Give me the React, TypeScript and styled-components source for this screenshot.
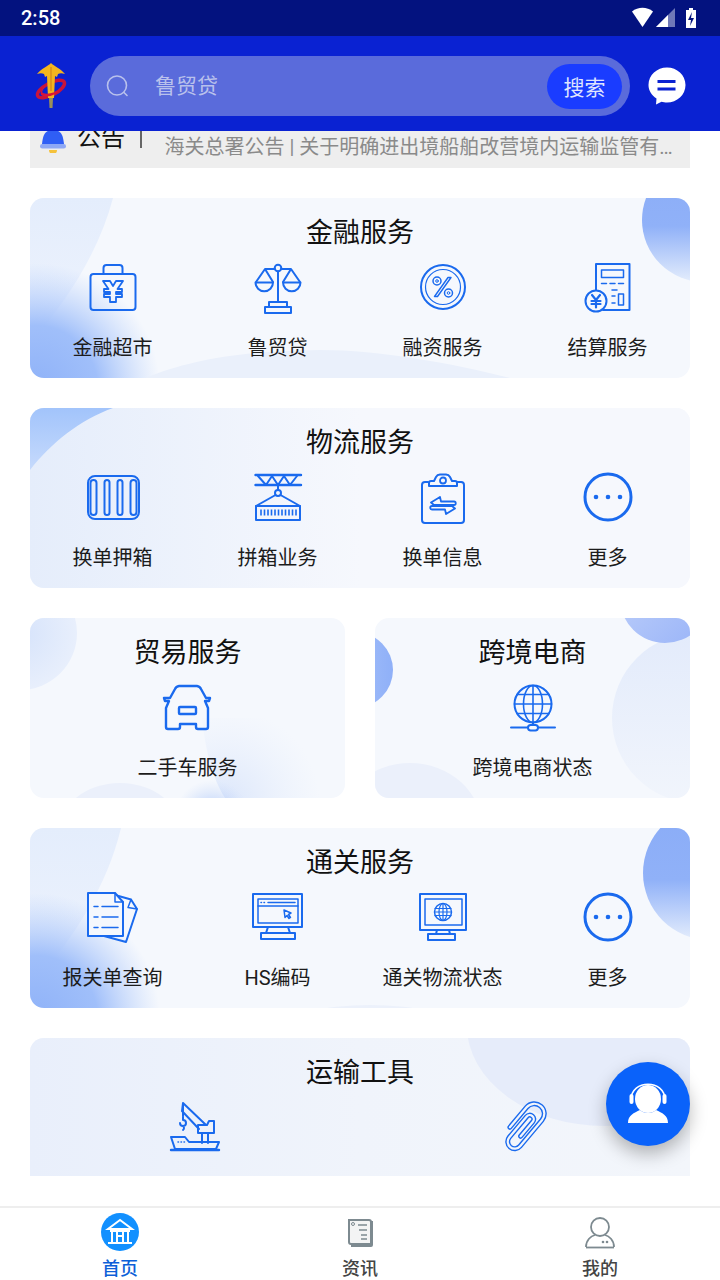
import React from "react";
import styled, { createGlobalStyle } from "styled-components";

const CJK = `Roboto, "Noto Sans CJK SC", "Noto Sans", sans-serif`;
const BLUE = "#1a6aee";

const Global = createGlobalStyle`
  html, body { margin: 0; padding: 0; background: #fff; }
  body { font-family: ${CJK}; }
`;

const Shell = styled.div`
  position: relative;
  width: 720px;
  height: 1280px;
  overflow: hidden;
  display: flex;
  flex-direction: column;
  background: #fff;
`;
const StatusBar = styled.div`
  height: 36px;
  flex: none;
  background: #03127f;
  display: flex;
  align-items: center;
  justify-content: space-between;
  padding: 0 21px;
  color: #fff;
`;
const Clock = styled.span`
  font: 500 20px Roboto, sans-serif;
`;
const StatusIcons = styled.div`
  display: flex;
  align-items: center;
`;
const Header = styled.header`
  position: relative;
  z-index: 2;
  height: 95px;
  flex: none;
  background: #0a22d2;
  display: flex;
  align-items: center;
  padding: 5px 32px 0 34px;
  box-sizing: border-box;
`;
const SearchPill = styled.div`
  width: 540px;
  height: 60px;
  margin: 0 17px 0 22px;
  border-radius: 30px;
  background: #5a6bdb;
  display: flex;
  align-items: center;
  padding: 0 8px 0 16px;
  box-sizing: border-box;
`;
const Placeholder = styled.span`
  flex: 1;
  margin-left: 25px;
  font-size: 21px;
  line-height: 28px;
  color: #b9c1ec;
`;
const SearchButton = styled.span`
  width: 75px;
  height: 45px;
  border-radius: 23px;
  background: #1a3cff;
  color: #dfe4ff;
  font-size: 21px;
  display: flex;
  align-items: center;
  justify-content: center;
`;
const Main = styled.main`
  flex: 1;
  min-height: 0;
  overflow: hidden;
  padding: 0 30px;
  display: flex;
  flex-direction: column;
  gap: 30px;
`;
const Notice = styled.div`
  flex: none;
  height: 67px;
  margin-top: -30px;
  background: #eeeeee;
  display: flex;
  align-items: flex-start;
  padding: 22px 0 0 10px;
  box-sizing: border-box;
`;
const NoticeLabel = styled.span`
  margin-left: 11px;
  font-size: 24px;
  line-height: 30px;
  color: #111;
`;
const NoticeRule = styled.span`
  width: 1.5px;
  height: 18px;
  margin: 7px 23px 0 15px;
  background: #666;
  flex: none;
`;
const NoticeText = styled.span`
  width: 512px;
  margin-top: 9px;
  font-size: 20px;
  line-height: 30px;
  color: #8a8a8a;
  white-space: nowrap;
  overflow: hidden;
  text-overflow: ellipsis;
`;
const Card = styled.section`
  position: relative;
  flex: none;
  height: 180px;
  border-radius: 14px;
  overflow: hidden;
  background: #f5f8fd;
  padding-top: 14px;
  box-sizing: border-box;
`;
const Art = styled.svg`
  position: absolute;
  inset: 0;
`;
const Title = styled.h2`
  position: relative;
  margin: 0 0 9px;
  text-align: center;
  font-size: 27px;
  line-height: 42px;
  font-weight: 400;
  color: #111;
`;
const Items = styled.div<{ $cols: number }>`
  position: relative;
  display: grid;
  grid-template-columns: repeat(${(p) => p.$cols}, 1fr);
`;
const Item = styled.div`
  display: flex;
  flex-direction: column;
  align-items: center;
  gap: 18px;
`;
const ItemLabel = styled.span`
  font-size: 20px;
  line-height: 30px;
  color: #1c1c1c;
  white-space: nowrap;
`;
const Glyph = styled.svg`
  display: block;
  overflow: visible;
  fill: none;
  stroke: ${BLUE};
  stroke-width: 2;
  stroke-linejoin: round;
  stroke-linecap: round;
`;
const HalfRow = styled.div`
  flex: none;
  display: grid;
  grid-template-columns: 1fr 1fr;
  gap: 30px;
`;
const Fab = styled.button`
  position: absolute;
  left: 606px;
  top: 1062px;
  width: 84px;
  height: 84px;
  padding: 0;
  border: 0;
  border-radius: 50%;
  background: #0a62fa;
  box-shadow: 0 8px 18px rgba(0, 0, 0, 0.28);
  display: flex;
  align-items: center;
  justify-content: center;
`;
const TabBar = styled.nav`
  flex: none;
  height: 74px;
  margin-top: 30px;
  border-top: 2px solid #eeeeee;
  box-sizing: border-box;
  display: grid;
  grid-template-columns: repeat(3, 240px);
`;
const Tab = styled.div`
  display: flex;
  flex-direction: column;
  align-items: center;
  padding-top: 5px;
`;
const TabIcon = styled.svg`
  display: block;
  height: 38px;
  width: 40px;
`;
const TabLabel = styled.span<{ $active?: boolean }>`
  margin-top: 7px;
  font-size: 18px;
  line-height: 22px;
  font-weight: 500;
  color: ${(p) => (p.$active ? "#0d5fd8" : "#444")};
`;

const Svg = ({ children }: { children: React.ReactNode }) => (
  <Glyph width="60" height="52" viewBox="0 0 60 52">
    {children}
  </Glyph>
);

const Briefcase = () => (
  <Svg>
    <rect x="7.500" y="11" width="45" height="36" rx="3" />
    <path d="M20.5 11V5a3 3 0 0 1 3-3h13a3 3 0 0 1 3 3v6" />
    <path strokeWidth="1.8" d="M20 18h7l3 5 3-5h7l-5.500 8h4.500v3h-6v2h6v3h-6v5h-6v-5h-6v-3h6v-2h-6v-3h4.500z" />
  </Svg>
);
const Scale = () => (
  <Svg>
    <circle cx="30" cy="5" r="3.300" />
    <path d="M30 8.500V39M26.700 6H17l-9 13M33.300 6H43l9 13M17 6l8 13M43 6l-8 13" />
    <path d="M7.500 19.500h17.500a8.700 8.700 0 0 1-17.500 0zM35 19.500h17.500a8.700 8.700 0 0 1-17.500 0z" />
    <path d="M21 44v-5h18v5M17 44h26v6H17z" />
  </Svg>
);
const Percent = () => (
  <Svg>
    <circle cx="30" cy="24" r="22" />
    <circle cx="30" cy="24" r="17.500" strokeWidth="1.200" />
    <circle cx="24" cy="18" r="4" strokeWidth="1.500" />
    <circle cx="24" cy="18" r="1.300" strokeWidth="1" />
    <circle cx="35.500" cy="30" r="4" strokeWidth="1.500" />
    <circle cx="35.500" cy="30" r="1.300" strokeWidth="1" />
    <path strokeWidth="1.400" d="M21.500 33.500L35 14.500h3L24.500 33.500z" />
  </Svg>
);
const Calculator = () => (
  <Svg>
    <path d="M18 29V1h33.500v46H25" />
    <rect x="23.500" y="7" width="22" height="7.500" strokeWidth="1.500" />
    <path strokeWidth="1.500" d="M23.500 20.500h5M32 20.500h5M40.500 20.500h5M34 27h5M34 33h3M34 40h3" />
    <rect x="40.500" y="31" width="5" height="11" strokeWidth="1.500" />
    <circle cx="18" cy="38" r="10.500" fill="#f5f8fd" />
    <path strokeWidth="2.200" d="M14 32l4 5 4-5M13.500 38h9M13.500 41h9M18 37v7.500" />
  </Svg>
);
const Container = () => (
  <Svg>
    <rect x="5" y="3" width="51" height="43" rx="7" />
    <rect x="7.500" y="7" width="6" height="35" rx="3" />
    <rect x="21.500" y="7" width="5" height="35" rx="2.500" />
    <rect x="34.500" y="7" width="5" height="35" rx="2.500" />
    <rect x="47.500" y="7" width="6" height="35" rx="3" />
  </Svg>
);
const Gantry = () => (
  <Svg>
    <path strokeWidth="2.400" d="M7.500 2h45.500M7.500 12h45.500" />
    <path strokeWidth="2" d="M10 3l8 9 6-9 6 9 6-9 6 9 7-9" />
    <circle cx="30" cy="20" r="3" />
    <path d="M30 12v5M27.500 22L8 33M32.500 22L52 33" />
    <rect x="8" y="33" width="44" height="14" />
    <path strokeWidth="1.600" strokeLinecap="butt" d="M13 36.500v6M16.500 36.500v6M20 36.500v6M23.500 36.500v6M27 36.500v6M30.500 36.500v6M34 36.500v6M37.500 36.500v6M41 36.500v6M44.500 36.500v6M48 36.500v6" />
  </Svg>
);
const Clipboard = () => (
  <Svg>
    <path d="M15 9h-3a3 3 0 0 0-3 3v35a3 3 0 0 0 3 3h36a3 3 0 0 0 3-3V12a3 3 0 0 0-3-3h-4" />
    <path d="M16 13V10a2 2 0 0 1 2-2h3l2-4a5 5 0 0 1 4-2.500h6a5 5 0 0 1 4 2.500l2 4h3a2 2 0 0 1 2 2v3z" />
    <circle cx="30" cy="7.500" r="3" strokeWidth="1.800" />
    <path strokeWidth="1.800" d="M27 24l-9 5.500 3 2.500h20a1.500 1.500 0 0 0 0-3.500H28zM33 41l9-5.500-3-2.500H19a1.500 1.500 0 0 0 0 3.500h13z" />
  </Svg>
);
const More = () => (
  <Svg>
    <circle cx="30" cy="24" r="23" strokeWidth="3" />
    <circle cx="18" cy="24" r="2.300" fill={BLUE} stroke="none" />
    <circle cx="30" cy="24" r="2.300" fill={BLUE} stroke="none" />
    <circle cx="42" cy="24" r="2.300" fill={BLUE} stroke="none" />
  </Svg>
);
const Car = () => (
  <Svg>
    <path strokeWidth="2.400" d="M12 15l5-9a5 5 0 0 1 4-3h18a5 5 0 0 1 4 3l5 9h4l-1 3h-4l3 7v19a2 2 0 0 1-2 2h-8a2 2 0 0 1-2-2v-3H22v3a2 2 0 0 1-2 2h-10a2 2 0 0 1-2-2V25l3-7H7l-1-3z" />
    <rect x="21" y="24" width="17" height="7" rx="1" strokeWidth="2.400" />
  </Svg>
);
const Globe = () => (
  <Svg>
    <circle cx="30" cy="21" r="18.500" />
    <ellipse cx="30" cy="21" rx="9.500" ry="18.500" strokeWidth="1.600" />
    <path strokeWidth="1.600" d="M30 2.500v37M14 11.500h32M11.500 21h37M14 30.500h32" />
    <path d="M30 39.500v2M8 44.500h17M35 44.500h17" />
    <rect x="25" y="42" width="10" height="5.500" rx="2.700" />
  </Svg>
);
const Docs = () => (
  <Svg>
    <path d="M32 2l16 4.500 6 9.500-11 33-22-6" />
    <path d="M48 6.500l-3 8 9 1.500" strokeWidth="1.500" />
    <path fill="#f5f8fd" d="M5 0h27l8 9v34H5z" />
    <path d="M32 0v9h8" strokeWidth="1.500" />
    <path strokeWidth="1.500" d="M11 13.500h4M19 13.500h16M11 24h4M19 24h16M11 34.500h4M19 34.500h16" />
  </Svg>
);
const MonitorCursor = () => (
  <Svg>
    <rect x="5" y="1" width="49" height="33" />
    <rect x="10" y="6" width="40" height="24" strokeWidth="1.500" />
    <path strokeWidth="1.500" d="M10 13h40M13 9.500h.5M16 9.500h.5M20 9.500h27" />
    <path strokeWidth="1.500" d="M36 17l7 3-2.500 1.500 2 3-1.500 1-2-3-2 2z" />
    <path d="M20 34l-2 6M40 34l2 6M13 40h34v6H13z" />
  </Svg>
);
const MonitorGlobe = () => (
  <Svg>
    <rect x="7" y="1" width="46" height="36" />
    <rect x="12" y="6" width="37" height="26" strokeWidth="1.500" />
    <circle cx="30" cy="19" r="8.500" strokeWidth="1.500" />
    <ellipse cx="30" cy="19" rx="4" ry="8.500" strokeWidth="1.200" />
    <path strokeWidth="1.200" d="M30 10.500v17M22 15.500h16M21.500 19h17M22 22.500h16" />
    <path d="M24 37l-1 4M36 37l1 4M15 41h27v6H15z" />
  </Svg>
);
const CraneShip = () => (
  <Svg>
    <path d="M18 0l23 22M18 0l-1 8 17 18M18 0v13" />
    <path strokeWidth="2" d="M18 14v3a3 3 0 0 1 0 6 3 3 0 0 1-3-3M18 23a2.500 2.500 0 0 1 0 4" />
    <path d="M33 22h9l2-4h5v12H33zM37 30v10M43 30v10" />
    <path d="M6 34h14l4 5h30l-3 7H10z" />
    <path strokeWidth="1.500" d="M13 39h.5M16 39h.5M19 39h.5" />
    <path strokeWidth="2.400" d="M6 47h48" />
  </Svg>
);
const Clip = () => {
  const d = "M40 14V40a10 10 0 0 1-20 0V6a7 7 0 0 1 14 0V33a4 4 0 0 1-8 0V14";
  return (
    <Svg>
      <g transform="translate(-1 -1) rotate(220 30 24)">
        <path d={d} strokeWidth="5" />
        <path d={d} stroke="#f2f5fb" strokeWidth="2.200" />
      </g>
    </Svg>
  );
};

const Art1 = ({ id, tr = 1 }: { id: string; tr?: number }) => (
  <Art width="660" height="180" viewBox="0 0 660 180">
    <defs>
      <linearGradient id={`${id}a`} x1="0" y1="0" x2="0" y2="1">
        <stop offset="0" stopColor="#e4edfc" />
        <stop offset="1" stopColor="#eef3fd" />
      </linearGradient>
      <radialGradient id={`${id}b`} gradientUnits="userSpaceOnUse" cx="5" cy="190" r="125">
        <stop offset="0" stopColor="#8fb2f8" />
        <stop offset="0.5" stopColor="#a0bffa" />
        <stop offset="1" stopColor="#b8d0fb" stopOpacity="0" />
      </radialGradient>
      <linearGradient id={`${id}c`} x1="0" y1="0" x2="0" y2="1">
        <stop offset="0" stopColor="#8aacf7" />
        <stop offset="0.55" stopColor="#90b1f8" />
        <stop offset="1" stopColor="#e4edfc" />
      </linearGradient>
    </defs>
    <path d={tr === 1 ? "M0 0H83C70 50 40 100 0 145Z" : "M0 0H91C78 55 45 110 0 160Z"} fill={`url(#${id}a)`} />
    <circle cx="5" cy="190" r="125" fill={`url(#${id}b)`} />
    {tr === 1 ? (
      <>
        <path d="M115 180C160 162 210 153 290 152C350 152 420 165 480 180Z" fill="#eaf0fb" />
        <circle cx="674" cy="22" r="62" fill={`url(#${id}c)`} />
      </>
    ) : (
      <>
        <ellipse cx="340" cy="270" rx="170" ry="93" fill="#ecf1fb" />
        <circle cx="680" cy="45" r="67" fill={`url(#${id}c)`} />
      </>
    )}
  </Art>
);

const Art2 = () => (
  <Art width="660" height="180" viewBox="0 0 660 180">
    <defs>
      <linearGradient id="l1" x1="0" y1="0" x2="1" y2="0">
        <stop offset="0" stopColor="#e5edfb" />
        <stop offset="1" stopColor="#f6f8fd" />
      </linearGradient>
      <linearGradient id="l2" x1="0" y1="0" x2="0" y2="1">
        <stop offset="0" stopColor="#a2c4fb" />
        <stop offset="1" stopColor="#c6dafc" />
      </linearGradient>
    </defs>
    <rect width="330" height="180" fill="url(#l1)" />
    <rect x="330" width="330" height="180" fill="#f6f8fd" />
    <path d="M0 62V0H83C50 12 22 34 0 62Z" fill="url(#l2)" />
  </Art>
);

const Art3 = () => (
  <Art width="315" height="180" viewBox="0 0 315 180">
    <defs>
      <radialGradient id="t1" gradientUnits="userSpaceOnUse" cx="-10" cy="15" r="57">
        <stop offset="0" stopColor="#d6e3fb" />
        <stop offset="1" stopColor="#e8effc" />
      </radialGradient>
      <radialGradient id="t2" gradientUnits="userSpaceOnUse" cx="182" cy="200" r="38">
        <stop offset="0" stopColor="#9ebcf8" />
        <stop offset="1" stopColor="#c9daf9" stopOpacity="0" />
      </radialGradient>
      <radialGradient id="t3" gradientUnits="userSpaceOnUse" cx="195" cy="185" r="95">
        <stop offset="0" stopColor="#dbe6fb" />
        <stop offset="1" stopColor="#e6eefc" stopOpacity="0" />
      </radialGradient>
    </defs>
    <circle cx="-10" cy="15" r="57" fill="url(#t1)" />
    <path d="M172 100C175 130 182 160 195 180H315V100Z" fill="url(#t3)" />
    <ellipse cx="90" cy="215" rx="62" ry="50" fill="#ebf0fb" />
    <circle cx="182" cy="200" r="38" fill="url(#t2)" />
  </Art>
);

const Art4 = () => (
  <Art width="315" height="180" viewBox="0 0 315 180">
    <defs>
      <linearGradient id="e1" x1="1" y1="0" x2="0" y2="0">
        <stop offset="0" stopColor="#8fb0f8" />
        <stop offset="1" stopColor="#b4cbfa" />
      </linearGradient>
      <linearGradient id="e2" x1="0" y1="0" x2="1" y2="1">
        <stop offset="0" stopColor="#c4d4fa" />
        <stop offset="1" stopColor="#98b3f8" />
      </linearGradient>
      <linearGradient id="e3" x1="0" y1="0" x2="0" y2="1">
        <stop offset="0" stopColor="#e3ebfb" />
        <stop offset="1" stopColor="#f1f5fc" />
      </linearGradient>
    </defs>
    <circle cx="-20" cy="52" r="38" fill="url(#e1)" />
    <circle cx="322" cy="100" r="85" fill="url(#e3)" />
    <ellipse cx="290" cy="-20" rx="45" ry="45" fill="url(#e2)" />
    <ellipse cx="35" cy="210" rx="72" ry="65" fill="#ebf0fb" />
  </Art>
);

const Art5 = () => (
  <Art width="660" height="180" viewBox="0 0 660 180">
    <defs>
      <linearGradient id="v1" x1="0" y1="0" x2="1" y2="0">
        <stop offset="0" stopColor="#e9effb" />
        <stop offset="0.5" stopColor="#f0f4fb" />
        <stop offset="1" stopColor="#f3f6fb" />
      </linearGradient>
    </defs>
    <rect width="660" height="180" fill="url(#v1)" />
    <ellipse cx="575" cy="-12" rx="138" ry="100" fill="#e6ecfa" />
  </Art>
);

const Row = ({ items }: { items: [React.ReactNode, string?][] }) => (
  <Items $cols={items.length}>
    {items.map(([icon, label], i) => (
      <Item key={i}>
        {icon}
        {label && <ItemLabel>{label}</ItemLabel>}
      </Item>
    ))}
  </Items>
);

export default function App() {
  return (
    <Shell>
      <Global />
      <StatusBar>
        <Clock>2:58</Clock>
        <StatusIcons>
          <svg width="67" height="22" viewBox="0 0 67 22">
            <path d="M0 4.500C6 -.5 15 -.5 21 4.500L10.500 20z" fill="#fff" />
            <path d="M24 20L43 1v19z" fill="#6f78b8" />
            <path d="M24 20L36 8v12z" fill="#fff" />
            <path d="M54 3h3V1h4v2h3v18H54z" fill="#fff" />
            <path d="M60 5l-4 8h3l-1 6 4-8h-3z" fill="#03127f" />
          </svg>
        </StatusIcons>
      </StatusBar>
      <Header>
        <svg width="34" height="48" viewBox="0 0 34 48">
          <path d="M15 36h4l-.5 10h-3z" fill="#9a8f5a" />
          <ellipse cx="17" cy="27" rx="15" ry="6" transform="rotate(-28 17 27)" fill="none" stroke="#c9143a" strokeWidth="3.500" />
          <path d="M17 1C14 4 7 7 3 12c3-1 5-1 7 0l1 3 2-1 1 22h6l1-22 2 1 1-3c2-1 4-1 7 0-4-5-11-8-14-11z" fill="#f3b51f" />
          <path d="M17 5v24" stroke="#d98f1c" strokeWidth="1.500" />
          <path d="M9 31c5 2 13-1 18-4-4 5-12 9-18 7-4-1-3-6 3-11-2 3-5 7-3 8z" fill="#d8143a" />
        </svg>
        <SearchPill>
          <svg width="24" height="24" viewBox="0 0 24 24" fill="none" stroke="#b9c1ec" strokeWidth="1.600" strokeLinecap="round">
            <circle cx="11" cy="11.500" r="9.500" />
            <path d="M18 18.500l3 3" />
          </svg>
          <Placeholder>鲁贸贷</Placeholder>
          <SearchButton>搜索</SearchButton>
        </SearchPill>
        <svg width="40" height="38" viewBox="0 0 40 38">
          <path d="M20 0.500C30 .5 38.500 8 38.500 18S30 35.500 20 35.500c-2 0-4-.3-5.500-.8L9 37.500l.5-6C4.500 28 1.500 23.500 1.500 18 1.500 8 10 .5 20 .5z" fill="#fff" />
          <path d="M10.500 14.500h18M10.500 22h18" stroke="#0a22d2" strokeWidth="3" />
        </svg>
      </Header>
      <Main>
        <Notice>
          <svg width="26" height="30" viewBox="0 0 26 30">
            <path d="M9 27h8a4 4 0 0 1-8 0z" fill="#f5c23c" />
            <path d="M2 21c1-8 2-14 11-14s10 6 11 14z" fill="#2f5ef5" />
            <rect y="21" width="26" height="4.500" rx="2.200" fill="#8ea8f5" />
          </svg>
          <NoticeLabel>公告</NoticeLabel>
          <NoticeRule />
          <NoticeText>海关总署公告 | 关于明确进出境船舶改营境内运输监管有关事项的公告</NoticeText>
        </Notice>
        <Card>
          <Art1 id="f" />
          <Title>金融服务</Title>
          <Row items={[[<Briefcase />, "金融超市"], [<Scale />, "鲁贸贷"], [<Percent />, "融资服务"], [<Calculator />, "结算服务"]]} />
        </Card>
        <Card>
          <Art2 />
          <Title>物流服务</Title>
          <Row items={[[<Container />, "换单押箱"], [<Gantry />, "拼箱业务"], [<Clipboard />, "换单信息"], [<More />, "更多"]]} />
        </Card>
        <HalfRow>
          <Card>
            <Art3 />
            <Title>贸易服务</Title>
            <Row items={[[<Car />, "二手车服务"]]} />
          </Card>
          <Card>
            <Art4 />
            <Title>跨境电商</Title>
            <Row items={[[<Globe />, "跨境电商状态"]]} />
          </Card>
        </HalfRow>
        <Card>
          <Art1 id="c" tr={2} />
          <Title>通关服务</Title>
          <Row items={[[<Docs />, "报关单查询"], [<MonitorCursor />, "HS编码"], [<MonitorGlobe />, "通关物流状态"], [<More />, "更多"]]} />
        </Card>
        <Card>
          <Art5 />
          <Title>运输工具</Title>
          <Row items={[[<CraneShip />], [<Clip />]]} />
        </Card>
      </Main>
      <TabBar>
        <Tab>
          <TabIcon viewBox="0 0 40 38">
            <ellipse cx="20" cy="19" rx="19" ry="19" fill="#1290ff" />
            <path d="M20 7L8 16h24z" fill="none" stroke="#fff" strokeWidth="2" />
            <path d="M10 18h20M8 30h24M12 18v11M17 18v11M23 18v11M28 18v11M17 23h6" fill="none" stroke="#fff" strokeWidth="2" />
          </TabIcon>
          <TabLabel $active>首页</TabLabel>
        </Tab>
        <Tab>
          <TabIcon viewBox="0 0 40 38">
            <path d="M9 7h20a2 2 0 0 1 2 2v22H11a2 2 0 0 1-2-2z M31 9h1v23a1 1 0 0 1-1 1H11" fill="#f3f4f4" stroke="#7d8a90" strokeWidth="2" />
            <path d="M18 12h9M19 17h8M21 22h6M21 26h6" stroke="#7d8a90" strokeWidth="1.400" fill="none" />
            <circle cx="13" cy="11" r="1.500" fill="none" stroke="#7d8a90" />
          </TabIcon>
          <TabLabel>资讯</TabLabel>
        </Tab>
        <Tab>
          <TabIcon viewBox="0 0 40 38">
            <circle cx="20" cy="14" r="9" fill="none" stroke="#7d8a90" strokeWidth="1.800" />
            <path d="M6 34c0-7 5-11 9-12M34 34c0-7-5-11-9-12" fill="none" stroke="#7d8a90" strokeWidth="1.800" />
            <path d="M6 34.500h28" stroke="#7d8a90" strokeWidth="1.800" />
            <circle cx="23" cy="29" r="1.300" fill="#7d8a90" />
            <circle cx="27" cy="29" r="1.300" fill="#7d8a90" />
          </TabIcon>
          <TabLabel>我的</TabLabel>
        </Tab>
      </TabBar>
      <Fab aria-label="客服">
        <svg width="44" height="44" viewBox="0 0 44 44">
          <path d="M5 18C5 -3 39 -3 39 18" fill="none" stroke="#fff" strokeWidth="1.600" />
          <ellipse cx="22" cy="17" rx="13" ry="14" fill="#fff" />
          <rect x="3.500" y="12" width="4" height="10" rx="2" fill="#fff" />
          <rect x="36.500" y="12" width="4" height="10" rx="2" fill="#fff" />
          <path d="M2 41C2 33 8 31 14 28C18 32 26 32 30 28C36 31 42 33 42 41Z" fill="#fff" />
        </svg>
      </Fab>
    </Shell>
  );
}
